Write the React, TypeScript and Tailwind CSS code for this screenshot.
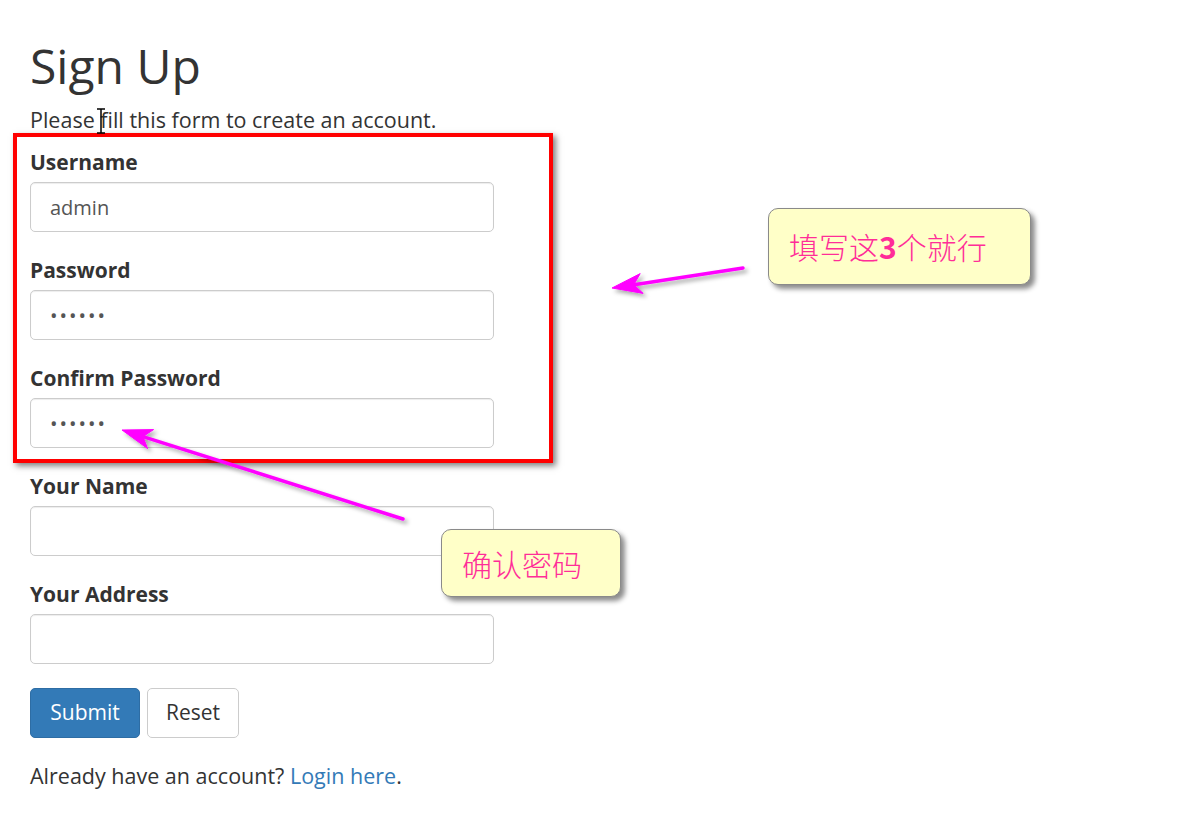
import React from 'react';

type Field = {
  label: string;
  type: string;
  value?: string;
};

const fields: Field[] = [
  { label: 'Username', type: 'text', value: 'admin' },
  { label: 'Password', type: 'password', value: '123456' },
  { label: 'Confirm Password', type: 'password', value: '123456' },
  { label: 'Your Name', type: 'text' },
  { label: 'Your Address', type: 'text' },
];

const Callout = ({ children, className }: { children: React.ReactNode; className: string }) => (
  <div
    className={`absolute flex items-center rounded-[10px] border border-[#8a8a8a] bg-[#ffffc8] pl-5 text-[30px] font-light text-[#ff2d98] shadow-[4px_4px_5px_rgba(0,0,0,0.45)] ${className}`}
    style={{ fontFamily: '"Noto Sans CJK SC", "Liberation Sans", sans-serif' }}
  >
    {children}
  </div>
);

// magenta annotation arrows drawn over the page
const Arrows = () => (
  <svg className="pointer-events-none absolute left-0 top-0" width="1200" height="823">
    <defs>
      <filter id="arrowShadow" x="-20%" y="-20%" width="140%" height="140%">
        <feDropShadow dx="3" dy="3" stdDeviation="2" floodColor="#000" floodOpacity="0.35" />
      </filter>
    </defs>
    <g filter="url(#arrowShadow)" fill="#ff00ff" stroke="#ff00ff">
      <line x1="743" y1="268" x2="634" y2="284.7" strokeWidth="3.5" strokeLinecap="round" />
      <polygon points="612,288 640.2,273.6 633.8,284.7 643.2,293.4" strokeWidth="1" strokeLinejoin="round" />
      <line x1="403" y1="519" x2="143" y2="436.6" strokeWidth="3.5" strokeLinecap="round" />
      <polygon points="122,430 153.6,429.6 143,436.6 147.6,448.6" strokeWidth="1" strokeLinejoin="round" />
    </g>
  </svg>
);

export default function App() {
  return (
    <div
      className="relative h-[823px] w-[1200px] overflow-hidden bg-white text-[#333]"
      style={{ fontFamily: '"Open Sans", "Noto Sans", sans-serif' }}
    >
      <div className="w-[494px] pl-[30px]">
        <h2 className="mt-[42px] text-[48px] font-normal leading-[48px]">Sign Up</h2>
        <p className="mt-[15px] text-[21.5px] leading-[30px]">Please fill this form to create an account.</p>

        <form className="mt-[12px]">
          {fields.map((f) => (
            <div key={f.label} className="mb-[23px]">
              <label className="block text-[21px] font-bold leading-[30px]">{f.label}</label>
              <input
                type={f.type}
                defaultValue={f.value}
                readOnly
                className={`mt-[5px] block h-[50px] w-full rounded-[5px] border border-[#ccc] bg-white px-[19px] text-[20px] text-[#555] shadow-[inset_0_1px_1px_rgba(0,0,0,0.075)] outline-none ${
                  f.type === 'password' ? 'tracking-[2px]' : ''
                }`}
              />
            </div>
          ))}

          <div className="mt-[24px] flex gap-[7px]">
            <button
              type="button"
              className="h-[50px] w-[110px] rounded-[5px] border border-[#2e6da4] bg-[#337ab7] text-[21px] text-white"
            >
              Submit
            </button>
            <button
              type="button"
              className="h-[50px] w-[92px] rounded-[5px] border border-[#ccc] bg-white text-[21px] text-[#333]"
            >
              Reset
            </button>
          </div>
        </form>

        <p className="mt-[23px] text-[21.5px] leading-[30px]">
          Already have an account? <a className="text-[#337ab7]">Login here</a>.
        </p>
      </div>

      {/* red highlight box */}
      <div className="pointer-events-none absolute left-[13px] top-[133px] h-[330px] w-[540px] border-4 border-[#ff0000] shadow-[3px_3px_6px_rgba(0,0,0,0.5)]" />

      {/* text cursor */}
      <svg className="pointer-events-none absolute left-[95px] top-[108px]" width="12" height="26">
        <path d="M2 1h8M2 25h8M6 1v24" stroke="#000" strokeWidth="1.5" fill="none" />
      </svg>

      <Arrows />

      <Callout className="left-[768px] top-[208px] h-[77px] w-[263px]">
        填写这<span className="font-bold">3</span>个就行
      </Callout>
      <Callout className="left-[441px] top-[529px] h-[68px] w-[180px]">确认密码</Callout>
    </div>
  );
}
